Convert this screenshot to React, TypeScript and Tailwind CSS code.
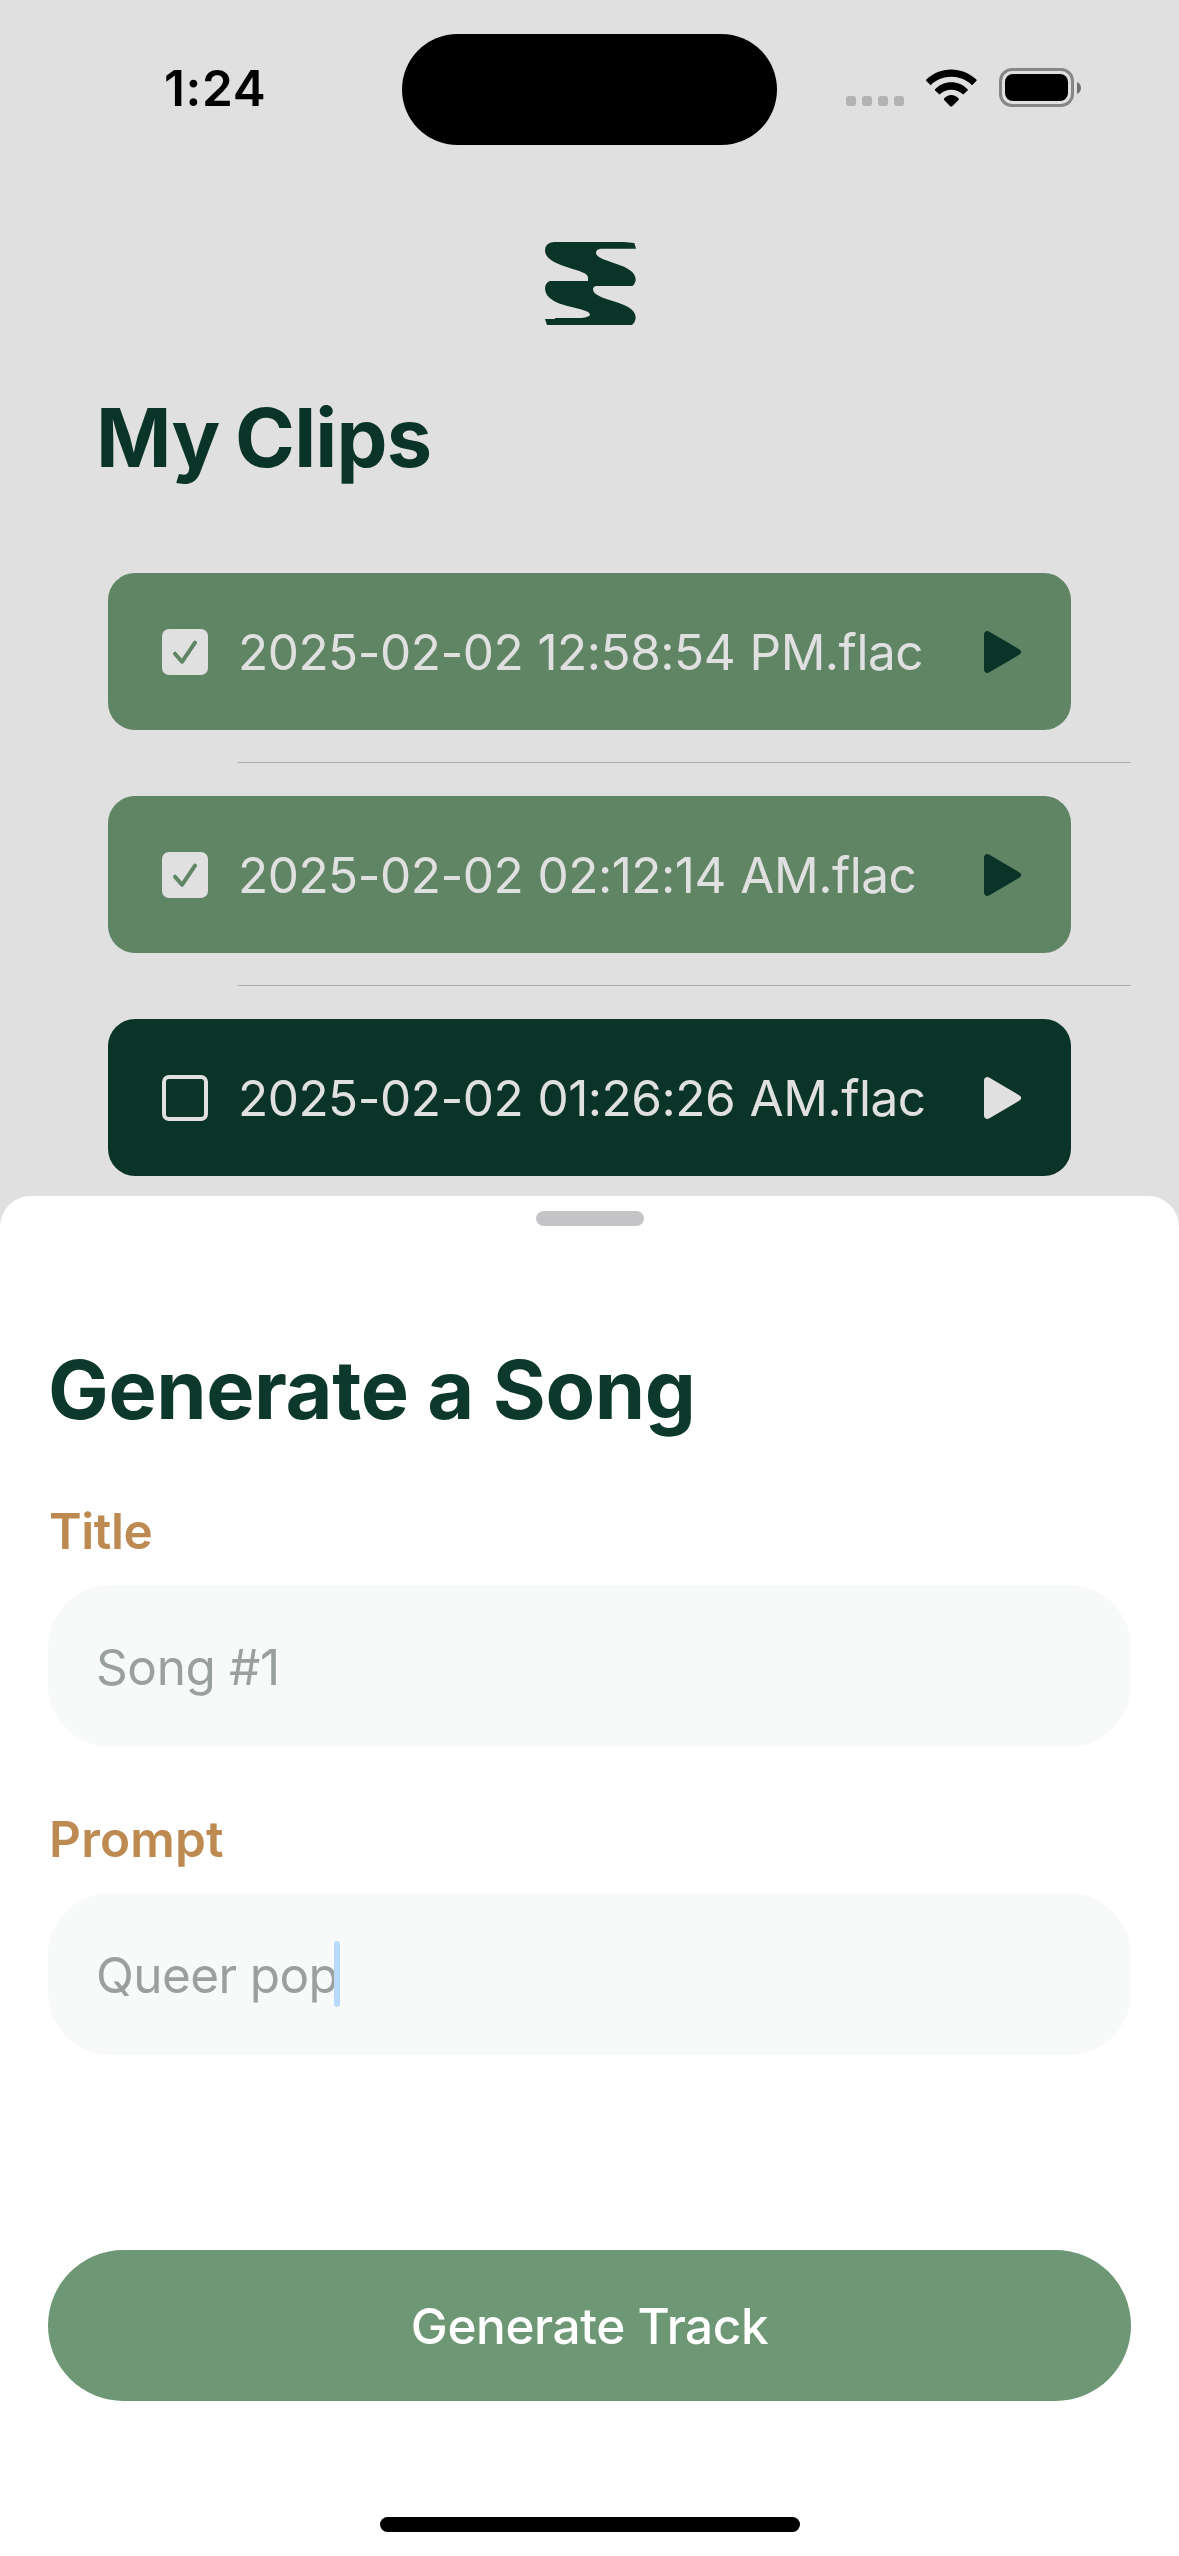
import clsx from 'clsx';

type Clip = { name: string; selected: boolean };

const clips: Clip[] = [
  { name: '2025-02-02 12:58:54 PM.flac', selected: true },
  { name: '2025-02-02 02:12:14 AM.flac', selected: true },
  { name: '2025-02-02 01:26:26 AM.flac', selected: false },
];

const WifiIcon = () => (
  <svg viewBox="379 86 152 113" className="w-[51px] h-[38px] ml-[22px]">
    <path d="M380 117C420 77 488 77 529 117Q531 120 529 122L516 134C482 101 427 101 393 134L380 122Q378 120 380 117Z" />
    <path d="M406 146C431 118 478 118 503 146Q505 148 503 150L490 162C470 143 439 143 419 162L406 150Q404 148 406 146Z" />
    <path d="M433 174C444 160 465 160 476 174Q478 176 476 178L457 197Q454 199 451 197L433 178Q431 176 433 174Z" />
  </svg>
);

const StatusBar = () => (
  <div className="flex items-center h-[176px] pt-0.5 shrink-0">
    <div className="w-[402px] pl-[164px] text-[49.5px] leading-[60px] font-semibold tracking-[0.67px] text-black -mt-0.5">1:24</div>
    <div className="w-[375px] h-[111px] bg-black rounded-full" />
    <div className="flex items-center h-[39px] ml-[69px] -mt-[3px]">
      <div className="flex gap-1.5 self-end pb-px">
        {[0, 1, 2, 3].map((i) => (
          <span key={i} className="size-2.5 rounded-[3px] bg-[#b3b3b3]" />
        ))}
      </div>
      <WifiIcon />
      <div className="w-[75px] h-[39px] ml-[22px] border-3 border-[#868686] rounded-[13px] p-[3px]">
        <div className="w-full h-full bg-black rounded-[8px]" />
      </div>
      <svg viewBox="0 0 4 12" className="w-1 h-3 ml-[3px]">
        <path d="M0 0C5.3 2 5.3 10 0 12Z" fill="#707070" />
      </svg>
    </div>
  </div>
);

const Logo = () => (
  <svg viewBox="135 96 273 249" className="w-[91px] h-[83px] mt-[66px] ml-[545px] shrink-0">
    <path
      fill="#0b3429"
      d="M162 96H372L403 99L408 116H303Q288 118 288 128C288 157 407 160 407 208Q407 221 397 228H288Q279 230 279 238C279 274 407 272 407 322Q407 336 396 345H141L135 327H165V324H244Q270 320 270 314C270 290 135 296 135 235Q135 220 149 213H264V202C264 176 135 172 135 121Q135 98 162 96Z"
    />
  </svg>
);

const Checkbox = ({ checked }: { checked: boolean }) =>
  checked ? (
    <svg viewBox="0 0 46 46" className="size-[46px]">
      <rect width="46" height="46" rx="7" fill="#e0e0e0" />
      <path d="M13 24.7L20 32.8L33 13.6" fill="none" stroke="#608565" strokeWidth="4" strokeLinecap="round" strokeLinejoin="round" />
    </svg>
  ) : (
    <div className="size-[46px] border-4 border-[#e0e0e0] rounded-[7px]" />
  );

const ClipRow = ({ clip }: { clip: Clip }) => (
  <div className={clsx('flex items-center h-[157px] mx-[108px] pl-[54px] pr-[49px] rounded-[27px]', clip.selected ? 'bg-[#608565]' : 'bg-[#0b3429]')}>
    <Checkbox checked={clip.selected} />
    <span className="flex-1 ml-[30px] text-[49.5px] leading-[60px] tracking-[-0.5px] [word-spacing:1px] whitespace-nowrap text-[#e0e0e0]">{clip.name}</span>
    <svg viewBox="0 0 38 42" className={clsx('w-[38px] h-[42px]', clip.selected ? 'fill-[#0b3429]' : 'fill-[#e0e0e0]')}>
      <path d="M0 3.5C0 .5 3 -.8 5.5 .7L35.5 18.5Q39 21 35.5 23.5L5.5 41.3C3 42.8 0 41.5 0 38.5Z" />
    </svg>
  </div>
);

const labelClass = 'pl-px text-[49.5px] leading-[60px] font-semibold text-[#bd8b51]';
const fieldClass = 'flex items-center h-[162px] pl-12 rounded-[62px] bg-[#f8faf9] text-[49.5px] leading-[60px] text-[#9aa19d]';

const GenerateSheet = () => (
  <section className="flex-1 flex flex-col mt-5 pt-[15px] px-12 bg-white rounded-t-[31px]">
    <div className="w-[108px] h-[15px] rounded-full bg-[#c5c5c7] self-center shrink-0" />
    <h2 className="mt-[114px] text-[81px] leading-[100px] font-bold tracking-[-0.4px] text-[#0c392c]">Generate a Song</h2>

    <p className={clsx(labelClass, 'mt-[61px] tracking-[-0.4px]')}>Title</p>
    <div className={clsx(fieldClass, 'mt-6 pt-0.5 tracking-[-0.4px]')}>Song #1</div>

    <p className={clsx(labelClass, 'mt-[62px] tracking-[0.2px]')}>Prompt</p>
    <div className={clsx(fieldClass, 'mt-6 pt-0.5 tracking-[-0.6px]')}>
      Queer pop
      <span className="w-1.5 h-[66px] -ml-1 -mt-0.5 rounded-full bg-[#b9dafc]" />
    </div>

    <button className="mt-[195px] h-[151px] rounded-full bg-[#6e9875] text-[49.5px] leading-[60px] font-medium tracking-[-0.43px] text-white shrink-0">
      Generate Track
    </button>
    <div className="w-[420px] h-[15px] mt-[116px] rounded-full bg-black self-center shrink-0" />
  </section>
);

const App = () => {
  return (
    <main className="w-[1179px] h-[2556px] flex flex-col overflow-hidden bg-[#e0e0e0] font-['Inter','Liberation_Sans',sans-serif]">
      <StatusBar />
      <Logo />
      <h1 className="mt-[63px] ml-24 text-[81px] leading-[100px] font-bold tracking-[-0.75px] [word-spacing:-3px] text-[#0b3429]">My Clips</h1>
      <div className="mt-[85px]">
        {clips.map((clip, i) => (
          <div key={clip.name}>
            {i > 0 && <div className="h-px mt-8 mb-[33px] ml-[238px] mr-12 bg-[#abaeac]" />}
            <ClipRow clip={clip} />
          </div>
        ))}
      </div>
      <GenerateSheet />
    </main>
  );
};

export default App;
